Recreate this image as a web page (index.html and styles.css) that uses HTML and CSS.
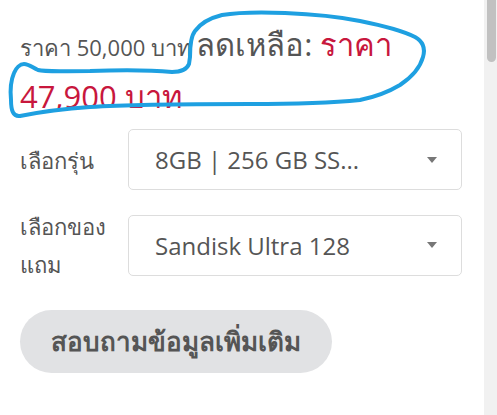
FILE: index.html
```html
<!DOCTYPE html>
<html lang="th">
<head>
    <meta charset="UTF-8">
    <meta name="viewport" content="width=device-width, initial-scale=1.0">
    <title>สินค้า</title>
    <link rel="stylesheet" href="styles.css">
</head>
<body>
    <div class="page">
        <div class="product">
            <p class="price">
                <span class="old">ราคา 50,000 บาท</span>
                <span class="sale">ลดเหลือ: <span class="red">ราคา 47,900 บาท</span></span>
            </p>

            <div class="row">
                <label class="label">เลือกรุ่น</label>
                <div class="select">
                    <span>8GB | 256 GB SS...</span>
                    <span class="arrow"></span>
                </div>
            </div>

            <div class="row">
                <label class="label">เลือกของแถม</label>
                <div class="select">
                    <span>Sandisk Ultra 128</span>
                    <span class="arrow"></span>
                </div>
            </div>

            <button class="ask">สอบถามข้อมูลเพิ่มเติม</button>

            <!-- hand drawn mark over the price -->
            <svg class="mark" width="440" height="125" viewBox="0 0 440 125">
                <path d="M190 57 C190 45 191 36 195 31 C200 24 210 18 222 15 C240 12 260 12 285 13 C310 14 335 16 360 21 C385 26 405 32 415 37 C424 42 425 50 423 57 C420 68 412 77 400 85 C390 91 380 96 360 100 C330 103 300 104 250 104 C180 104 120 105 90 107 C60 109 35 113 20 116 C13 117 11 110 11 100 C10 90 11 80 14 73 C16 68 20 64 24 64 C29 64 33 68 38 70 C45 72 60 71 90 71 C120 70 150 70 172 72 C182 72 187 69 189 64 Z" />
            </svg>
        </div>

        <div class="scrollbar">
            <div class="thumb"></div>
        </div>
    </div>
</body>
</html>
```

FILE: styles.css
```css
body {
    margin: 0;
    font-family: "Open Sans", "Noto Sans", sans-serif;
    color: #555;
    background: #fff;
}

.page {
    display: flex;
    height: 415px;
    overflow: hidden;
}

.product {
    position: relative;
    flex: 1;
    padding: 0 22px 0 20px;
}

.price {
    margin: 21px 0 0;
    line-height: 46px;
}

.old {
    font-size: 22px;
}

.sale {
    font-size: 31px;
}

.red {
    color: #c8173d;
}

.row {
    display: flex;
    align-items: center;
    margin-top: 17px;
}

.row:first-of-type {
    margin-top: 4px;
}

.label {
    width: 108px;
    flex: none;
    font-size: 22px;
    line-height: 38px;
}

.select {
    flex: 1;
    height: 59px;
    border: 1px solid #ddd;
    border-radius: 5px;
    display: flex;
    align-items: center;
    justify-content: space-between;
    padding: 0 24px 0 26px;
    font-size: 24px;
}

.arrow {
    width: 0;
    height: 0;
    border-left: 5px solid transparent;
    border-right: 5px solid transparent;
    border-top: 6px solid #777;
}

.ask {
    margin-top: 27px;
    width: 312px;
    height: 63px;
    border: none;
    border-radius: 32px;
    background-color: #e1e2e4;
    color: #555;
    font-family: inherit;
    font-size: 26px;
    font-weight: bold;
    cursor: pointer;
}

.mark {
    position: absolute;
    left: 0;
    top: 0;
    pointer-events: none;
}

.mark path {
    fill: none;
    stroke: #1ea0e1;
    stroke-width: 4;
    stroke-linecap: round;
    stroke-linejoin: round;
}

.scrollbar {
    width: 13px;
    flex: none;
    background: #f1f1f1;
}

.thumb {
    margin: 0 1px 0 3px;
    height: 62px;
    background: #c1c1c1;
    border-radius: 0 0 5px 5px;
}
```
